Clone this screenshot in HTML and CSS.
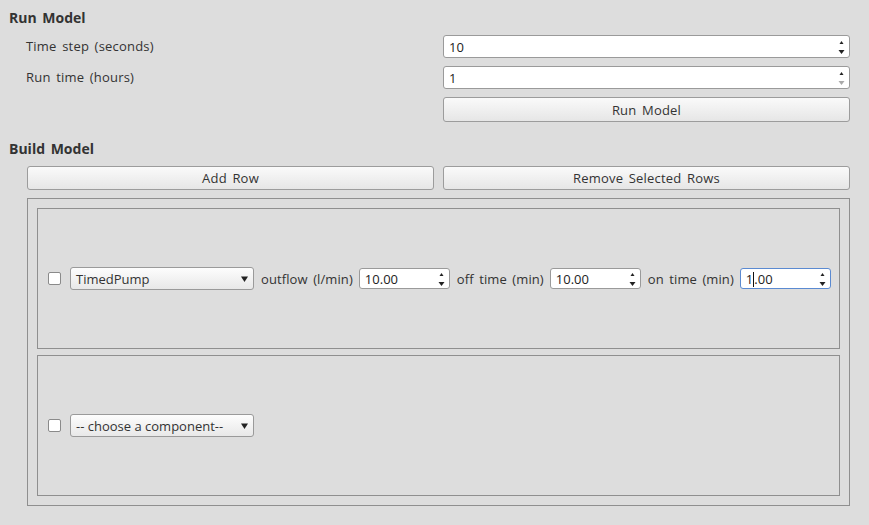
FILE: index.html
```html
<!DOCTYPE html>
<html>
<head>
<meta charset="utf-8">
<link rel="stylesheet" href="styles.css">
</head>
<body>
<div class="page">
  <div class="heading">Run Model</div>
  <div class="form">
    <div class="label">Time step (seconds)</div>
    <div class="spin wide"><span class="val">10</span><span class="arrows"><svg width="7" height="16" viewBox="0 0 7 16"><path d="M3.5 2 L5.5 5 L1.5 5Z" fill="#222"/><path d="M0.5 11 L6.5 11 L3.5 15Z" fill="#222"/></svg></span></div>
    <div class="label">Run time (hours)</div>
    <div class="spin wide"><span class="val">1</span><span class="arrows"><svg width="7" height="16" viewBox="0 0 7 16"><path d="M3.5 2 L5.5 5 L1.5 5Z" fill="#222"/><path d="M0.5 11 L6.5 11 L3.5 15Z" fill="#aaa"/></svg></span></div>
    <div></div>
    <div class="btn">Run Model</div>
  </div>
  <div class="heading">Build Model</div>
  <div class="build">
    <div class="btns">
      <div class="btn">Add Row</div>
      <div class="btn">Remove Selected Rows</div>
    </div>
    <div class="frame">
      <div class="row">
        <div class="check"></div>
        <div class="combo w184"><span>TimedPump</span><svg width="7" height="6" viewBox="0 0 7 6"><path d="M0 0.5 L7 0.5 L3.5 6Z" fill="#222"/></svg></div>
        <span class="rlabel">outflow (l/min)</span>
        <div class="spin small"><span class="val">10.00</span><span class="arrows"><svg width="7" height="16" viewBox="0 0 7 16"><path d="M3.5 2 L5.5 5 L1.5 5Z" fill="#222"/><path d="M0.5 11 L6.5 11 L3.5 15Z" fill="#222"/></svg></span></div>
        <span class="rlabel">off time (min)</span>
        <div class="spin small"><span class="val">10.00</span><span class="arrows"><svg width="7" height="16" viewBox="0 0 7 16"><path d="M3.5 2 L5.5 5 L1.5 5Z" fill="#222"/><path d="M0.5 11 L6.5 11 L3.5 15Z" fill="#222"/></svg></span></div>
        <span class="rlabel">on time (min)</span>
        <div class="spin small focus"><span class="val">1<span class="caret"></span>.00</span><span class="arrows"><svg width="7" height="16" viewBox="0 0 7 16"><path d="M3.5 2 L5.5 5 L1.5 5Z" fill="#222"/><path d="M0.5 11 L6.5 11 L3.5 15Z" fill="#222"/></svg></span></div>
      </div>
      <div class="row">
        <div class="check"></div>
        <div class="combo w184"><span>-- choose a component--</span><svg width="7" height="6" viewBox="0 0 7 6"><path d="M0 0.5 L7 0.5 L3.5 6Z" fill="#222"/></svg></div>
      </div>
    </div>
  </div>
</div>
</body>
</html>
```
FILE: styles.css
```css
html, body {
  margin: 0;
  padding: 0;
  background: #dddddd;
}
body {
  font-family: "Open Sans", "Liberation Sans", sans-serif;
  font-size: 13px;
  word-spacing: 2px;
  letter-spacing: 0.2px;
  color: #333333;
  width: 869px;
  height: 525px;
  overflow: hidden;
}
.page {
  padding-top: 8px;
}
.heading {
  font-weight: bold;
  font-size: 14px;
  letter-spacing: 0;
  padding-left: 9px;
  height: 20px;
  line-height: 20px;
}
.form {
  display: grid;
  grid-template-columns: 1fr 1fr;
  grid-template-rows: 23px 23px 25px;
  column-gap: 9px;
  row-gap: 8px;
  padding: 7px 19px 0 27px;
  margin-bottom: 17px;
}
.label {
  line-height: 23px;
  margin-left: -1px;
  white-space: nowrap;
}
.spin {
  display: flex;
  align-items: center;
  justify-content: space-between;
  background: #ffffff;
  border: 1px solid #9a9a9a;
  border-radius: 3px;
  box-sizing: border-box;
  padding: 0 4px 0 5px;
  color: #222;
  word-spacing: 0;
  letter-spacing: 0;
  flex-shrink: 0;
}
.spin .arrows {
  display: flex;
  align-items: center;
}
.spin.small {
  width: 91px;
  height: 21px;
}
.spin.focus {
  border-color: #5b8ad1;
}
.caret {
  display: inline-block;
  width: 1px;
  height: 15px;
  background: #111;
  vertical-align: -3px;
}
.btn {
  height: 25px;
  box-sizing: border-box;
  border: 1px solid #9c9c9c;
  border-radius: 3px;
  background: linear-gradient(#fafafa, #e6e6e6);
  display: flex;
  align-items: center;
  justify-content: center;
  color: #333;
  white-space: nowrap;
}
.build {
  padding: 7px 19px 0 27px;
}
.btns {
  display: grid;
  grid-template-columns: 1fr 1fr;
  column-gap: 9px;
  margin-bottom: 8px;
}
.btns .btn {
  height: 24px;
}
.frame {
  border: 1px solid #8f8f8f;
  padding: 9px 9px 9px 9px;
  display: flex;
  flex-direction: column;
  gap: 6px;
}
.row {
  border: 1px solid #8f8f8f;
  height: 139px;
  display: flex;
  align-items: center;
  padding-left: 10px;
}
.check {
  width: 13px;
  height: 13px;
  box-sizing: border-box;
  border: 1px solid #8a8a8a;
  border-radius: 2px;
  background: #fff;
  margin-right: 9px;
  flex-shrink: 0;
}
.combo {
  height: 23px;
  box-sizing: border-box;
  border: 1px solid #9a9a9a;
  border-radius: 3px;
  background: linear-gradient(#fdfdfd, #e8e8e8);
  display: flex;
  align-items: center;
  justify-content: space-between;
  padding: 0 5px 0 5px;
  color: #333;
  word-spacing: 0;
  letter-spacing: 0;
  flex-shrink: 0;
}
.w184 {
  width: 184px;
}
.rlabel {
  margin: 0 6px 0 7px;
  white-space: nowrap;
  letter-spacing: 0.1px;
}
```
